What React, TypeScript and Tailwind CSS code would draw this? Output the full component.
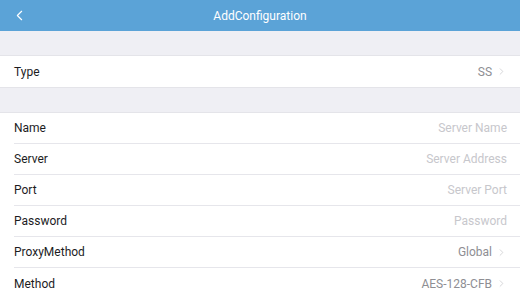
import { ChevronLeft, ChevronRight } from 'lucide-react';

type Row = { label: string; value: string; placeholder?: boolean; chevron?: boolean };

const rows: Row[] = [
  { label: 'Name', value: 'Server Name', placeholder: true },
  { label: 'Server', value: 'Server Address', placeholder: true },
  { label: 'Port', value: 'Server Port', placeholder: true },
  { label: 'Password', value: 'Password', placeholder: true },
  { label: 'ProxyMethod', value: 'Global', chevron: true },
  { label: 'Method', value: 'AES-128-CFB', chevron: true },
];

function Cell({ row, last }: { row: Row; last?: boolean }) {
  return (
    <div className="shrink-0 pl-[14px]">
      <div
        className={
          'flex h-[31px] items-center justify-between pr-[13px] ' +
          (last ? '' : 'border-b border-[#e6e6eb]')
        }
      >
        <span className="text-[12px] text-[#1c1c1e]">{row.label}</span>
        <span
          className={
            'flex items-center gap-[4px] text-[12px] ' +
            (row.placeholder ? 'text-[#c7c7cc]' : 'text-[#8e8e93]')
          }
        >
          {row.value}
          {row.chevron && <ChevronRight className="h-[11px] w-[11px] text-[#c4c4c8]" strokeWidth={1.5} />}
        </span>
      </div>
    </div>
  );
}

export default function App() {
  return (
    <div className="flex h-[293px] w-[520px] flex-col overflow-hidden bg-[#efeff4] font-['Roboto','Liberation_Sans',sans-serif]">
      <div className="relative flex h-[31px] shrink-0 items-center justify-center bg-[#5ba3d7]">
        <ChevronLeft className="absolute left-[11px] h-[17px] w-[17px] text-white" strokeWidth={1.6} />
        <span className="text-[12px] text-white">AddConfiguration</span>
      </div>

      <div className="h-[25px] shrink-0 border-b border-[#e4e4e9]" />

      <div className="shrink-0 border-b border-[#e4e4e9] bg-white">
        <Cell row={{ label: 'Type', value: 'SS', chevron: true }} last />
      </div>

      <div className="h-[25px] shrink-0 border-b border-[#e4e4e9]" />

      <div className="shrink-0 bg-white">
        {rows.map((r, i) => (
          <Cell key={r.label} row={r} last={i === rows.length - 1} />
        ))}
      </div>
    </div>
  );
}
